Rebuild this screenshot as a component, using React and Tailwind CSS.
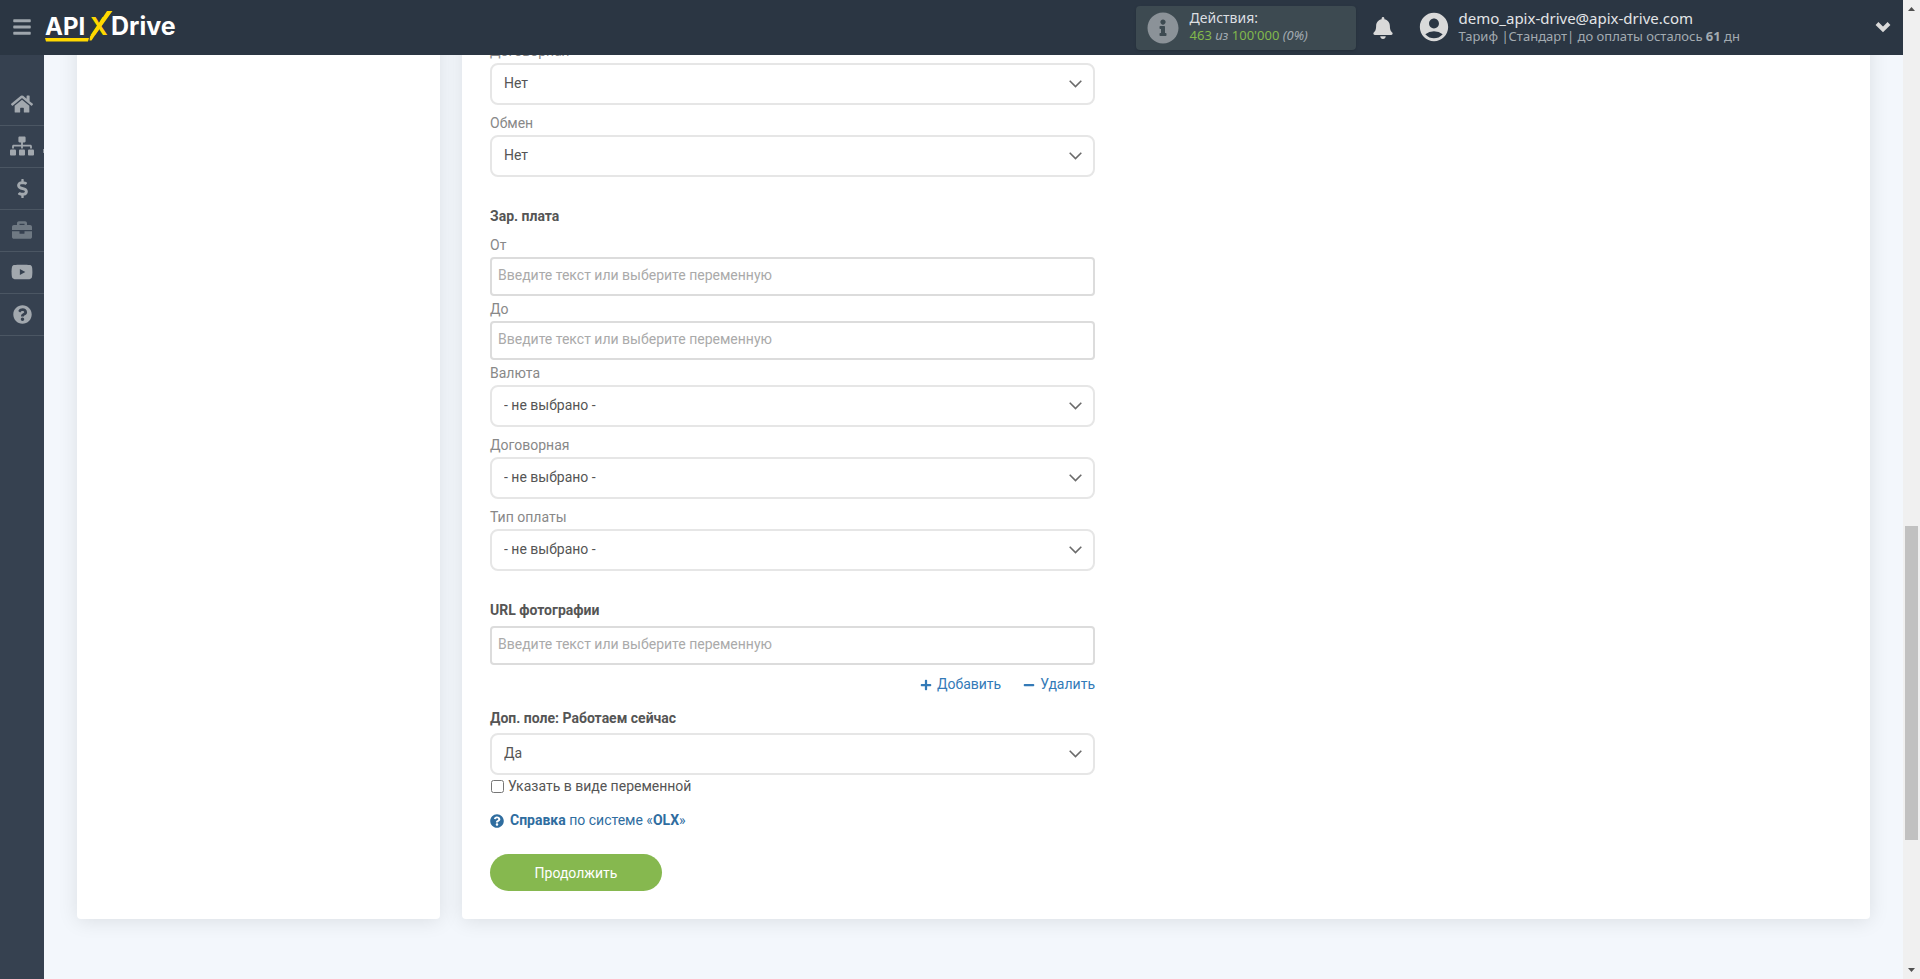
import React, { useState } from 'react';
import {
  FaBars,
  FaBell,
  FaBriefcase,
  FaDollarSign,
  FaHome,
  FaInfoCircle,
  FaMinus,
  FaPlus,
  FaQuestionCircle,
  FaSitemap,
  FaYoutube,
} from 'react-icons/fa';
import { MdAccountCircle } from 'react-icons/md';

const NAV_ITEMS = [
  { label: 'Главная', icon: FaHome, size: 22 },
  { label: 'Связи', icon: FaSitemap, size: 24, marker: true },
  { label: 'Оплата', icon: FaDollarSign, size: 19 },
  { label: 'Инструменты', icon: FaBriefcase, size: 20, dim: true },
  { label: 'Видео', icon: FaYoutube, size: 22 },
  { label: 'Помощь', icon: FaQuestionCircle, size: 19 },
];

const PLACEHOLDER = 'Введите текст или выберите переменную';

const Logo = () => (
  <svg width="136" height="37" viewBox="0 0 136 37" role="img" aria-label="APIXDrive">
    <g fill="#ffffff" fontFamily="Inter, sans-serif" fontSize="24" fontWeight="700">
      <text x="1" y="27">API</text>
      <text x="67" y="27" fontSize="25">Drive</text>
    </g>
    <g fill="#ffd800">
      <text x="46" y="27" fontFamily="Inter, sans-serif" fontSize="24" fontWeight="700">X</text>
      <path d="M1 30h44l-1 3.500H2z" />
      <path d="M63 3h5.500L50.500 28l-3 4.500h-2l.5-4z" />
    </g>
  </svg>
);

const Header = () => (
  <header className="flex h-[55px] shrink-0 items-center bg-[#2b3643] pb-0.5 text-[#d9d9d9]">
    <button type="button" aria-label="Меню" className="ml-3 text-[#9fa6ad]">
      <FaBars size={20} />
    </button>
    <a href="#" className="ml-3">
      <Logo />
    </a>

    <div className="mt-[3px] ml-auto flex h-11 w-[220px] items-center gap-[11px] rounded bg-[#3d4a51] pl-[11px] shadow-sm">
      <FaInfoCircle size={32} className="text-[#8b9298]" />
      <div className="pb-1 font-['Noto_Sans',sans-serif]">
        <div className="text-sm leading-[18px] text-[#dcdfe1]">Действия:</div>
        <div className="text-[13px] leading-[17px] text-[#a3abb1]">
          <span className="text-[#82b84c]">463</span> <i>из</i>{' '}
          <span className="text-[#82b84c]">100'000</span> <i>(0%)</i>
        </div>
      </div>
    </div>

    <button type="button" aria-label="Уведомления" className="mt-0.5 ml-4">
      <FaBell size={22} />
    </button>
    <MdAccountCircle size={34} className="ml-[23px]" />
    <div className="ml-2 pt-px font-['Noto_Sans',sans-serif]">
      <div className="text-[15px] leading-[18px] text-[#e3e5e7]">demo_apix-drive@apix-drive.com</div>
      <div className="text-[13px] leading-[18px] text-[#a3abb1]">
        Тариф |Стандарт| до оплаты осталось <b>61</b> дн
      </div>
    </div>
    <button type="button" aria-label="Профиль" className="mr-3 ml-[135px]">
      <svg width="16" height="12" viewBox="0 0 16 12" fill="none" stroke="currentColor" strokeWidth="4">
        <path d="M2 2.500l6 6 6-6" />
      </svg>
    </button>
  </header>
);

const Sidebar = () => (
  <nav className="w-11 shrink-0 bg-[#364150] pt-[29px]">
    {NAV_ITEMS.map(({ label, icon: Icon, size, dim, marker }) => (
      <a
        key={label}
        href="#"
        aria-label={label}
        className={`relative flex h-[42px] items-center justify-center border-b border-[#4b5663] pb-px ${
          dim ? 'text-[#6f7983]' : 'text-[#a2a8ae]'
        }`}
      >
        <Icon size={size} />
        {marker && <span className="absolute right-0 bottom-3.5 h-1 w-px bg-[#8b939b]" />}
      </a>
    ))}
  </nav>
);

const Label = ({ htmlFor, children }) => (
  <label htmlFor={htmlFor} className="mb-[3px] block leading-[18px] text-[#888888]">
    {children}
  </label>
);

const Title = ({ htmlFor, children }) => (
  <label htmlFor={htmlFor} className="block leading-[21px] font-bold text-[#555555]">
    {children}
  </label>
);

const SelectBox = ({ id, options }) => (
  <div className="relative">
    <select
      id={id}
      className="block h-[42px] w-full appearance-none rounded-lg border-2 border-[#e6e6e6] bg-white px-3 pb-0.5 text-[#555555]"
    >
      {options.map((o) => (
        <option key={o}>{o}</option>
      ))}
    </select>
    <svg
      width="13"
      height="8"
      viewBox="0 0 13 8"
      className="pointer-events-none absolute top-[17px] right-[13px]"
      fill="none"
      stroke="#6b6b6b"
      strokeWidth="1.600"
    >
      <path d="M.7.7l5.800 5.800 5.800-5.800" />
    </svg>
  </div>
);

const TextBox = ({ id }) => (
  <input
    id={id}
    type="text"
    placeholder={PLACEHOLDER}
    className="block h-[39px] w-full rounded border-2 border-[#dcdcdc] bg-white px-1.5 pb-1 text-[#555555] placeholder:text-[#aaaaaa]"
  />
);

const SelectField = ({ id, label, options }) => (
  <div className="mb-[9px]">
    <Label htmlFor={id}>{label}</Label>
    <SelectBox id={id} options={options} />
  </div>
);

const TextField = ({ id, label }) => (
  <div className="mb-1">
    <Label htmlFor={id}>{label}</Label>
    <TextBox id={id} />
  </div>
);

const SettingsForm = () => {
  const [asVariable, setAsVariable] = useState(false);

  return (
    <form className="w-full max-w-[605px]" onSubmit={(e) => e.preventDefault()}>
      <SelectField id="price-deal" label="Договорная" options={['Нет', 'Да']} />
      <SelectField id="exchange" label="Обмен" options={['Нет', 'Да']} />

      <fieldset className="mt-[29px]">
        <legend className="mb-[9px] block leading-[21px] font-bold text-[#555555]">Зар. плата</legend>
        <TextField id="salary-from" label="От" />
        <TextField id="salary-to" label="До" />
        <SelectField id="currency" label="Валюта" options={['- не выбрано -']} />
        <SelectField id="salary-deal" label="Договорная" options={['- не выбрано -']} />
        <SelectField id="pay-type" label="Тип оплаты" options={['- не выбрано -']} />
      </fieldset>

      <div className="mt-5">
        <Title htmlFor="photo-url">URL фотографии</Title>
        <div className="mt-[5px]">
          <TextBox id="photo-url" />
        </div>
        <div className="mt-[9px] flex justify-end gap-[22px] leading-[21px] text-[#337ab7]">
          <button type="button" className="flex items-center gap-[5px]">
            <FaPlus size={12} />
            Добавить
          </button>
          <button type="button" className="flex items-center gap-[5px]">
            <FaMinus size={12} />
            Удалить
          </button>
        </div>
      </div>

      <div className="mt-[13px]">
        <Title htmlFor="working-now">Доп. поле: Работаем сейчас</Title>
        <div className="mt-1">
          <SelectBox id="working-now" options={['Да', 'Нет']} />
        </div>
        <label className="flex items-center gap-1 leading-[23px] text-[#555555]">
          <input
            type="checkbox"
            checked={asVariable}
            onChange={(e) => setAsVariable(e.target.checked)}
            className="ml-px"
          />
          Указать в виде переменной
        </label>
      </div>

      <a href="#" className="mt-3 flex items-center gap-1.5 leading-[21px] text-[#2f6d9f]">
        <FaQuestionCircle size={14} />
        <span>
          <b>Справка</b> по системе «<b>OLX</b>»
        </span>
      </a>

      <button
        type="submit"
        className="mt-[23px] block h-[37px] w-[172px] rounded-full bg-[#86b84f] text-white"
      >
        Продолжить
      </button>
    </form>
  );
};

const ScrollBar = () => (
  <div className="flex w-[17px] shrink-0 flex-col items-center bg-[#f0f0f0]" aria-hidden="true">
    <svg width="17" height="17" viewBox="0 0 17 17" fill="#505050">
      <path d="M5 11l3.500-4L12 11z" />
    </svg>
    <div className="flex-[509]" />
    <div className="w-[13px] flex-[314] bg-[#c1c1c1]" />
    <div className="flex-[122]" />
    <svg width="17" height="17" viewBox="0 0 17 17" fill="#505050">
      <path d="M5 6l3.500 4L12 6z" />
    </svg>
  </div>
);

const App = () => (
  <div className="flex h-screen overflow-hidden font-[Roboto,sans-serif] text-sm">
    <div className="flex min-w-0 flex-1 flex-col">
      <Header />
      <div className="flex min-h-0 flex-1 overflow-hidden">
        <Sidebar />
        <main className="flex min-w-0 flex-1 items-start overflow-hidden bg-[#f3f7fc] pr-[33px] pl-[33px]">
          {/* The page is scrolled down, so the tops of both cards sit above the header */}
          <div className="-mt-12 flex flex-1 gap-[22px]">
            <section className="w-[363px] shrink-0 rounded bg-white shadow-[0_2px_20px_rgba(0,0,0,0.1)]" />
            <section className="min-w-0 flex-1 rounded bg-white px-7 pt-[35px] pb-7 shadow-[0_2px_20px_rgba(0,0,0,0.1)]">
              <SettingsForm />
            </section>
          </div>
        </main>
      </div>
    </div>
    <ScrollBar />
  </div>
);

export default App;
